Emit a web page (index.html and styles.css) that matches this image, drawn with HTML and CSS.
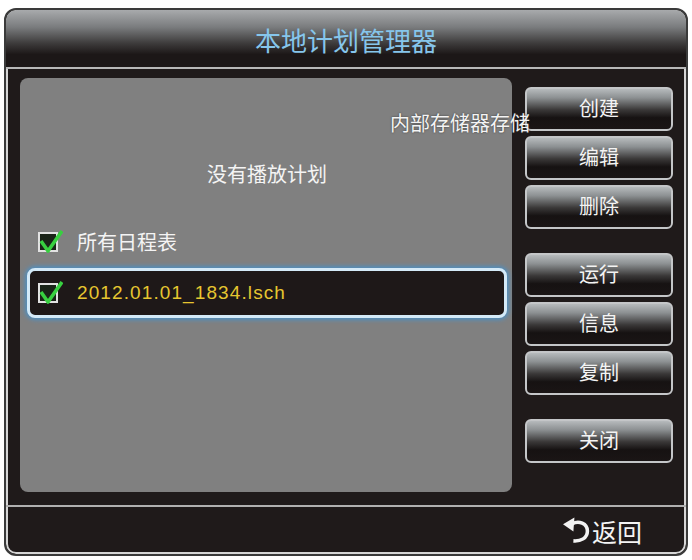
FILE: index.html
```html
<!DOCTYPE html>
<html lang="zh-CN">
<head>
    <meta charset="UTF-8">
    <title>本地计划管理器</title>
    <link rel="stylesheet" href="styles.css">
</head>
<body>
    <div class="window">
        <div class="header">
            <h1>本地计划管理器</h1>
        </div>

        <div class="main">
            <div class="panel">
                <p class="empty">没有播放计划</p>
                <div class="row">
                    <span class="check">
                        <svg viewBox="0 0 24 24" width="24" height="24"><path d="M2 11 L9 21 L23 1" fill="none" stroke="#38d040" stroke-width="3.6" stroke-linejoin="round"/></svg>
                    </span>
                    <span class="label">所有日程表</span>
                </div>
                <div class="row selected">
                    <span class="check">
                        <svg viewBox="0 0 24 24" width="24" height="24"><path d="M2 11 L9 21 L23 1" fill="none" stroke="#38d040" stroke-width="3.6" stroke-linejoin="round"/></svg>
                    </span>
                    <span class="file">2012.01.01_1834.lsch</span>
                </div>
            </div>

            <div class="buttons">
                <button>创建</button>
                <button>编辑</button>
                <button>删除</button>
                <button class="spaced">运行</button>
                <button>信息</button>
                <button>复制</button>
                <button class="spaced">关闭</button>
            </div>

            <!-- storage label sits over the button column -->
            <span class="storage">内部存储器存储</span>
        </div>

        <div class="footer">
            <svg class="back-icon" viewBox="0 0 26 26" width="27" height="27">
                <path d="M9 6.5 C15 3, 23.5 6, 23.5 13.5 C23.5 20.5, 17 23.5, 10 23" fill="none" stroke="#f2f2f2" stroke-width="3.4"/>
                <polygon points="0,7 11,0.5 10,14" fill="#f2f2f2"/>
            </svg>
            <span class="back">返回</span>
        </div>
    </div>
</body>
</html>
```

FILE: styles.css
```css
body {
    margin: 0;
    background-color: #ffffff;
    font-family: "Noto Sans CJK SC", "Liberation Sans", sans-serif;
}

.window {
    box-sizing: border-box;
    width: 684px;
    height: 548px;
    margin: 8px 0 0 4px;
    border: 2px solid #3a3a3a;
    border-radius: 12px;
    box-shadow: inset 0 0 0 2px #d6d6d6;
    background-color: #1f1a1a;
    display: flex;
    flex-direction: column;
    overflow: hidden;
}

.header {
    height: 57px;
    flex-shrink: 0;
    border-bottom: 2px solid #b8b8b8;
    background: linear-gradient(#a8aaac 0%, #7a7c7e 30%, #3e3c3c 58%, #1c1717 78%, #1c1717 100%);
    border-radius: 10px 10px 0 0;
    display: flex;
    justify-content: center;
    align-items: center;
}

h1 {
    margin: 0;
    font-size: 26px;
    font-weight: normal;
    color: #86c6ec;
    line-height: 30px;
    padding-top: 3px;
}

.main {
    position: relative;
    height: 438px;
    flex-shrink: 0;
    border-bottom: 2px solid #b0b0b0;
    box-sizing: border-box;
    display: flex;
    padding: 9px 0 0 14px;
}

.panel {
    box-sizing: border-box;
    width: 492px;
    height: 414px;
    background-color: #808080;
    border-radius: 8px;
    padding: 84px 5px 0 7px;
}

.empty {
    margin: 0;
    line-height: 24px;
    font-size: 20px;
    color: #f4f4f4;
    text-align: center;
}

.row {
    box-sizing: border-box;
    height: 50px;
    display: flex;
    align-items: center;
    gap: 19px;
    padding-left: 11px;
    margin-top: 31px;
}

.row.selected {
    margin-top: 1px;
    padding-left: 8px;
    border: 3px solid #d4eaf8;
    border-radius: 8px;
    background-color: #1e1818;
    box-shadow: 0 0 4px 2px #4f8fc0;
}

.check {
    position: relative;
    box-sizing: border-box;
    width: 20px;
    height: 20px;
    border: 2px solid #e2e2e2;
    background-color: #1a2418;
    flex-shrink: 0;
}

.check svg {
    position: absolute;
    left: -1px;
    top: -4px;
}

.label {
    font-size: 20px;
    color: #f4f4f4;
    line-height: 24px;
}

.file {
    font-family: "Liberation Sans", sans-serif;
    font-size: 19px;
    letter-spacing: 1.1px;
    color: #e6c630;
}

.buttons {
    width: 148px;
    margin-left: 13px;
    padding-top: 9px;
    display: flex;
    flex-direction: column;
    gap: 5px;
}

button {
    box-sizing: border-box;
    height: 44px;
    width: 148px;
    border: 2px solid #c4c6c8;
    border-radius: 6px;
    background: linear-gradient(#b6babc 0%, #8c9092 22%, #3a3838 52%, #161212 72%, #1a1515 100%);
    color: #f4f4f4;
    font-family: "Noto Sans CJK SC", sans-serif;
    font-size: 20px;
    line-height: 24px;
    padding: 0 0 2px 0;
}

button.spaced {
    margin-top: 19px;
}

.storage {
    position: absolute;
    left: 384px;
    top: 43px;
    font-size: 20px;
    line-height: 22px;
    color: #f4f4f4;
    text-shadow: 0 0 2px #333;
    white-space: nowrap;
}

.footer {
    flex: 1;
    display: flex;
    justify-content: flex-end;
    align-items: center;
    padding-right: 44px;
    gap: 2px;
}

.back {
    font-size: 25px;
    color: #f4f4f4;
    line-height: 30px;
}
```
